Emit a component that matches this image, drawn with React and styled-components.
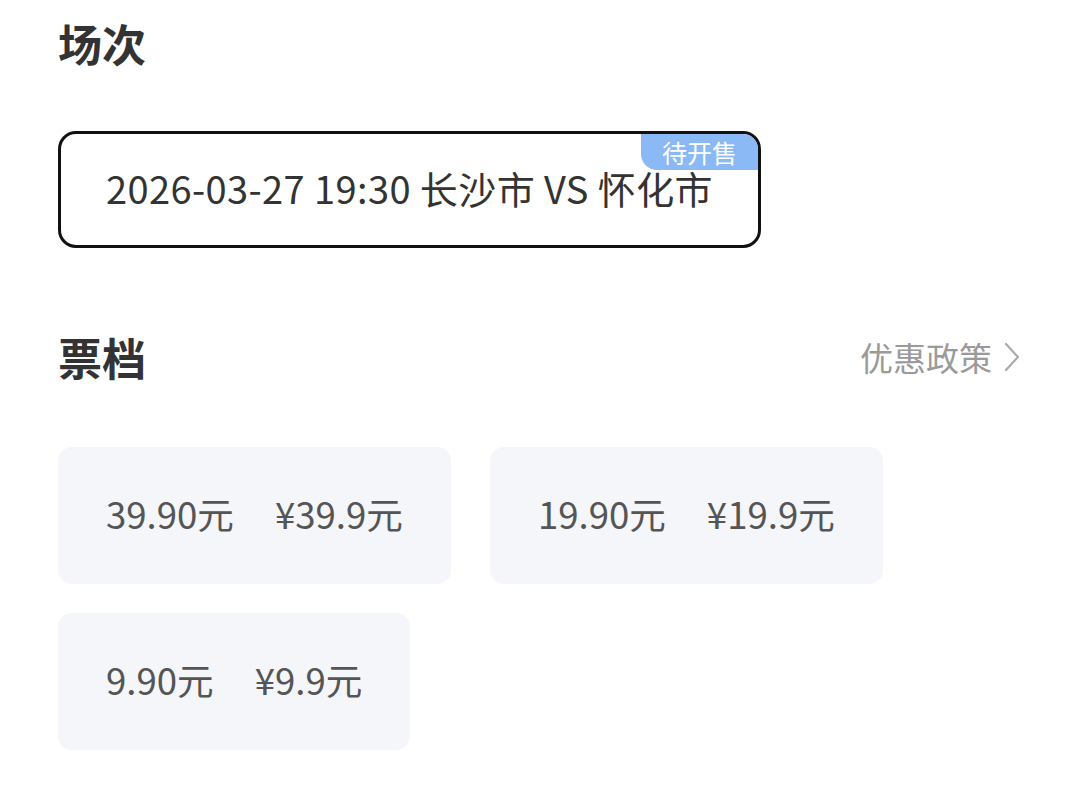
import styled, { createGlobalStyle } from "styled-components";

const GlobalStyle = createGlobalStyle`
	html, body {
		margin: 0;
		padding: 0;
		background: #ffffff;
	}
	body {
		font-family: "Noto Sans CJK SC", "Noto Sans", sans-serif;
		color: #333333;
	}
`;

const Page = styled.div`
	padding: 18px 58px 0 58px;
	width: 1080px;
	box-sizing: border-box;
`;

const SectionHead = styled.div`
	display: flex;
	align-items: center;
	justify-content: space-between;
	height: 50px;
	margin-bottom: ${ props => props.gap }px;
`;

const Title = styled.h2`
	margin: 0;
	font-size: 44px;
	line-height: 50px;
	font-weight: 700;
	color: #333333;
`;

const MoreLink = styled.a`
	display: flex;
	align-items: center;
	gap: 12px;
	margin-right: 2px;
	font-size: 33px;
	color: #9a9a9a;
	text-decoration: none;
	cursor: pointer;
`;

const SessionCard = styled.div`
	position: relative;
	width: 703px;
	height: 117px;
	box-sizing: border-box;
	border: 3px solid #111111;
	border-radius: 18px;
	display: flex;
	align-items: center;
	padding-left: 45px;
	padding-bottom: 4px;
	margin-bottom: 84px;
	overflow: hidden;
`;

const SessionText = styled.span`
	font-size: 38px;
	line-height: 38px;
	letter-spacing: 0.4px;
	color: #333333;
`;

const StatusBadge = styled.span`
	position: absolute;
	top: 0;
	right: 0;
	width: 117px;
	height: 36px;
	display: flex;
	align-items: center;
	justify-content: center;
	background: #8ab9f6;
	color: #ffffff;
	font-size: 25px;
	line-height: 30px;
	border-bottom-left-radius: 16px;
`;

const TicketGrid = styled.div`
	display: flex;
	flex-wrap: wrap;
	column-gap: 39px;
	row-gap: 29px;
	width: 840px;
`;

const TicketCard = styled.div`
	height: 137px;
	box-sizing: border-box;
	padding: 0 48px 5px;
	display: flex;
	align-items: center;
	gap: 41px;
	background: #f5f6fa;
	border-radius: 14px;
	font-size: 36.6px;
	color: #555555;
`;

const tickets = [
	{ price: "39.90元", sale: "¥39.9元" },
	{ price: "19.90元", sale: "¥19.9元" },
	{ price: "9.90元", sale: "¥9.9元" },
];

const Chevron = () => (
	<svg width="16" height="30" viewBox="0 0 16 30" fill="none">
		<path d="M2 2 L14 15 L2 28" stroke="#aaaaaa" strokeWidth="2.2" strokeLinecap="round" strokeLinejoin="round" />
	</svg>
);

const App = () => {
	return (
		<Page>
			<GlobalStyle />
			<SectionHead gap={ 63 }>
				<Title>场次</Title>
			</SectionHead>
			<SessionCard>
				<SessionText>2026-03-27 19:30 长沙市 VS 怀化市</SessionText>
				<StatusBadge>待开售</StatusBadge>
			</SessionCard>
			<SectionHead gap={ 65 }>
				<Title>票档</Title>
				<MoreLink>
					优惠政策
					<Chevron />
				</MoreLink>
			</SectionHead>
			<TicketGrid>
				{ tickets.map( ticket => (
					<TicketCard key={ ticket.price }>
						<span>{ ticket.price }</span>
						<span>{ ticket.sale }</span>
					</TicketCard>
				) ) }
			</TicketGrid>
		</Page>
	);
};

export default App;
